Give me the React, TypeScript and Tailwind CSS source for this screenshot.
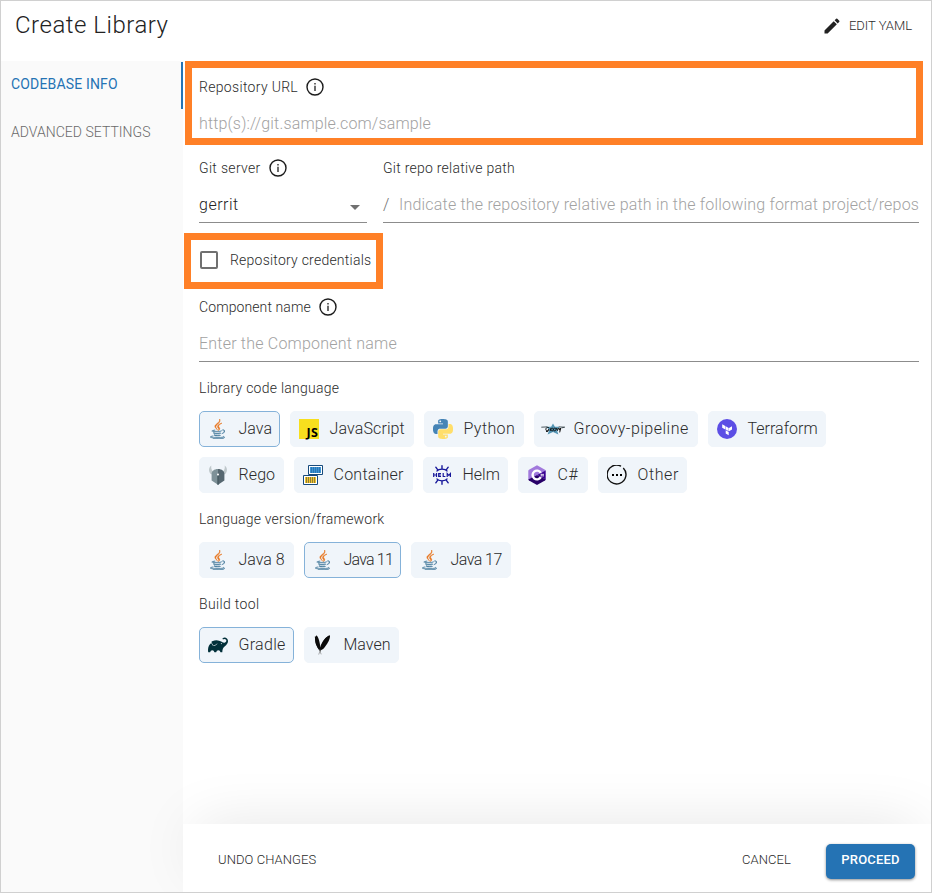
import type { ReactNode } from "react";
import { MdEdit } from "react-icons/md";
import { SiGradle } from "react-icons/si";

const JavaIcon = () => (
  <svg viewBox="0 0 384 512" className="mr-px h-5 w-[15px]">
    <g fill="#e8761f" stroke="#e8761f" strokeWidth="14">
      <path d="M192.34 280.8c-19-42.7-83.1-80.2 0-145.8C296 53.2 242.84 0 242.84 0c21.5 84.5-75.6 110.1-110.7 162.6-23.9 35.9 11.7 74.4 60.2 118.2z" />
      <path d="M306.94 104.6c.1 0-175.2 43.8-91.5 140.2 24.7 28.4-6.5 54-6.5 54s62.7-32.4 33.9-72.9c-26.9-37.8-47.5-56.6 64.1-121.3z" />
    </g>
    <g fill="#4b7f9f" stroke="#4b7f9f" strokeWidth="12">
      <path d="M277.74 312.9c9.8-6.7 23.4-12.5 23.4-12.5s-38.7 7-77.2 10.2c-47.1 3.9-97.7 4.7-123.1 1.3-60.1-8 33-30.1 33-30.1s-36.1-2.4-80.6 19c-52.5 25.4 130 37 224.5 12.1z" />
      <path d="M300.84 375.1a12.19 12.19 0 0 1-2 2.6c128.3-33.7 81.1-118.9 19.8-97.3a17.33 17.33 0 0 0-8.2 6.3 70.45 70.45 0 0 1 11-3c31-6.5 75.5 41.5-20.6 91.4z" />
      <path d="M348 437.4s14.5 11.9-15.9 21.2c-57.9 17.5-240.8 22.8-291.6.7-18.3-7.9 16-19 26.8-21.3 11.2-2.4 17.7-2 17.7-2-20.3-14.3-131.3 28.1-56.4 40.2C232.84 509.4 401 461.3 348 437.4zM124.44 396c-78.7 22 47.9 67.4 148.1 24.5a185.89 185.89 0 0 1-28.2-13.8c-44.7 8.5-65.4 9.1-106 4.5-33.5-3.8-13.9-15.2-13.9-15.2z" />
      <path d="M304.24 493.2c-78.7 14.8-175.8 13.1-233.3 3.6 0-.1 11.8 9.7 72.4 13.6 92.2 5.9 233.8-3.3 237.1-46.9 0 0-6.4 16.5-76.2 29.7z" />
      <path d="M260.64 353c-59.2 11.4-93.5 11.1-136.8 6.6-33.5-3.5-11.6-19.7-11.6-19.7-86.8 28.8 48.2 61.4 169.5 25.9a60.37 60.37 0 0 1-21.1-12.8z" />
    </g>
  </svg>
);

const JsIcon = () => (
  <span className="flex size-5 items-end justify-end bg-[#f7df1e] pr-px font-['Open_Sans',sans-serif] text-[12.5px] leading-[13px] font-bold tracking-[0.2px] text-black">
    JS
  </span>
);

const PythonIcon = () => (
  <svg viewBox="0 0 24 24" className="size-5">
    <path
      fill="#4584b6"
      d="M14.25.18l.9.2.73.26.59.3.45.32.34.34.25.34.16.33.1.3.04.26.02.2-.01.13V8.5l-.05.63-.13.55-.21.46-.26.38-.3.31-.33.25-.35.19-.35.14-.33.1-.3.07-.26.04-.21.02H8.77l-.69.05-.59.14-.5.22-.41.27-.33.32-.27.35-.2.36-.15.37-.1.35-.07.32-.04.27-.02.21v3.06H3.17l-.21-.03-.28-.07-.32-.12-.35-.18-.36-.26-.36-.36-.35-.46-.32-.59-.28-.73-.21-.88-.14-1.05-.05-1.23.06-1.22.16-1.04.24-.87.32-.71.36-.57.4-.44.42-.33.42-.24.4-.16.36-.1.32-.05.24-.01h.16l.06.01h8.16v-.83H6.18l-.01-2.75-.02-.37.05-.34.11-.31.17-.28.25-.26.31-.23.38-.2.44-.18.51-.15.58-.12.64-.1.71-.06.77-.04.84-.02 1.27.05zm-6.3 1.98l-.23.33-.08.41.08.41.23.34.33.22.41.09.41-.09.33-.22.23-.34.08-.41-.08-.41-.23-.33-.33-.22-.41-.09-.41.09z"
    />
    <path
      fill="#ffde6a"
      d="M21.04 6.11l.28.06.32.12.35.18.36.27.36.35.35.47.32.59.28.73.21.88.14 1.04.05 1.23-.06 1.23-.16 1.04-.24.86-.32.71-.36.57-.4.45-.42.33-.42.24-.4.16-.36.09-.32.05-.24.02-.16-.01h-8.22v.82h5.84l.01 2.76.02.36-.05.34-.11.31-.17.29-.25.25-.31.24-.38.2-.44.17-.51.15-.58.13-.64.09-.71.07-.77.04-.84.01-1.27-.04-1.07-.14-.9-.2-.73-.25-.59-.3-.45-.33-.34-.34-.25-.34-.16-.33-.1-.3-.04-.25-.02-.2.01-.13v-5.34l.05-.64.13-.54.21-.46.26-.38.3-.32.33-.24.35-.2.35-.14.33-.1.3-.06.26-.04.21-.02.13-.01h5.84l.69-.05.59-.14.5-.21.41-.28.33-.32.27-.35.2-.36.15-.36.1-.35.07-.32.04-.28.02-.21V6.07h2.09l.14.01zm-6.47 14.25l-.23.33-.08.41.08.41.23.33.33.23.41.08.41-.08.33-.23.23-.33.08-.41-.08-.41-.23-.33-.33-.23-.41-.08-.41.08z"
    />
  </svg>
);

const GroovyIcon = () => (
  <svg viewBox="0 0 24 12" className="h-3 w-6 shrink-0">
    <path d="M12 .6l1.900 3.200h5l-3.100 3 1.600 4.700-5.400-2.400-5.400 2.400 1.600-4.700-3.100-3h5z" fill="#5596b5" />
    <path d="M.3 4.200l6-.3M17.700 3.900l6 .3-3.200.7" fill="none" stroke="#39454b" strokeWidth=".9" />
    <path
      d="M7.800 4.600c-1.600-.8-3.300.6-2.900 2.200s2.200 1.300 2.600-.4M7.600 6.300c.2 1.900-1.300 2.800-2.600 2M9.300 7.900V5.300M11.100 5.100a1.200 1.400 0 1 0 .1 0M13.700 5.100a1.200 1.400 0 1 0 .1 0M15.500 5l1 2.600 1-2.600M18 5l.7 2.200 1-2.200-1 4.400"
      fill="none"
      stroke="#111"
      strokeWidth="1"
    />
  </svg>
);

const TerraformIcon = () => (
  <svg viewBox="0 0 20 20" className="size-5">
    <circle cx="10" cy="10" r="10" fill="#5c4ee5" />
    <path d="M5.200 5.200l3.100 1.700v3.500L5.200 8.700zM8.700 7.200l3 1.700v3.400l-3-1.700zM15 7.200v3.400l-3 1.700V8.900zM8.700 11.200l3 1.700v3.400l-3-1.700z" fill="#fff" />
  </svg>
);

const RegoIcon = () => (
  <svg viewBox="0 0 20 20" className="size-5">
    <path d="M3.300.4C.3 2.700.2 7.200 3.600 9.600l1.700-3C3.500 5 2.900 3 3.300.4zM16.700.4c3 2.300 3.100 6.800-.3 9.200l-1.700-3c1.800-1.600 2.400-3.600 2-6.200z" fill="#bfc8cb" />
    <path d="M10 4c-4 0-6.400 2.200-6.400 5v6.500L10 19.800z" fill="#7e9198" />
    <path d="M10 4c4 0 6.400 2.200 6.400 5v6.500L10 19.800z" fill="#566770" />
    <path d="M9.300 10.500h1.400v9.100L10 20l-.7-.4z" fill="#465a61" />
    <circle cx="10" cy="9.600" r="1" fill="#fff" />
  </svg>
);

const ContainerIcon = () => (
  <svg viewBox="0 0 20 20" className="size-5">
    <path d="M5.500.5h14v9h-14z" fill="#fff" stroke="#174a7c" />
    <path d="M7 2h11v6H7z" fill="#3c94d4" />
    <path d="M8.500 2v6M10.500 2v6M12.500 2v6M14.500 2v6M16.500 2v6" stroke="#1e5f9d" strokeWidth=".6" />
    <path d="M.5 10.500h14v9H.5z" fill="#fff" stroke="#174a7c" />
    <path d="M2 12h11v6H2z" fill="#f0c62f" />
    <path d="M3.500 12v6M5.500 12v6M7.500 12v6M9.500 12v6M11.500 12v6" stroke="#4f4a3a" strokeWidth=".6" />
  </svg>
);

const HelmIcon = () => (
  <svg viewBox="0 0 20 20" className="size-5" fill="none" stroke="#17179a">
    <path d="M4.500 6.300C7 3.300 13 3.300 15.500 6.300M4.500 13.700c2.500 3 8.500 3 11 0" strokeWidth="1.300" />
    <path d="M10 3.600V.8M5.600 4.600L3.800 2.200M14.400 4.600l1.800-2.400M10 16.400v2.800M5.600 15.400l-1.800 2.400M14.400 15.400l1.800 2.400" strokeWidth="1.400" strokeLinecap="round" />
    <path d="M1.700 8v4M4.500 8v4M1.700 10h2.800M9 8.500H6.700v3H9M6.700 10h2.200M11.200 8v3.500h2.200M15.200 12V8.500l1.600 1.800 1.600-1.800V12" strokeWidth="1.200" />
  </svg>
);

const CSharpIcon = () => (
  <svg viewBox="0 0 20 20" className="size-5">
    <path d="M10 .2l8 4.500q.7.500.7 1.200L10 10 1.300 14.900V5.900q0-.8.700-1.200z" fill="#a179dc" />
    <path d="M1.300 14.500L10 10l8.700 4.300q0 .7-.7 1.200l-8 4.400-8-4.400q-.7-.4-.7-1z" fill="#280068" />
    <path d="M18.700 5.600v9L10 10z" fill="#390091" />
    <path d="M13.800 7.800a4.400 4.400 0 1 0 0 4.400" fill="none" stroke="#fff" strokeWidth="2.400" />
    <path d="M14.300 8.600v3M16.100 8.600v3M13.600 9.500h3.300M13.600 10.800h3.300" stroke="#fff" strokeWidth=".6" />
  </svg>
);

const OtherIcon = () => (
  <svg viewBox="0 0 20 20" className="size-5">
    <path d="M15.200 1.900A9.400 9.400 0 1 0 17.200 3.900" transform="rotate(-8 10 10)" fill="none" stroke="#111" strokeWidth="1.400" />
    <path d="M5 9h2v2H5zM9 9h2v2H9zM13 9h2v2h-2z" fill="#000" />
  </svg>
);

const MavenIcon = () => (
  <svg viewBox="0 0 20 20" className="size-5">
    <path d="M3.600.3C2.200 2 1.500 6 3.200 10c.7 2 1.800 3.700 3.200 5.300.9-2 .9-4.500.3-7.400C6 4.500 5.200 2 3.600.3z" fill="#0b0b0b" />
    <path d="M16.900.5c-2.300.4-4.400 2.200-6.200 5.300-1.700 3-3 6.200-3.300 9.600 2-.6 3.600-1.900 5-4.100 2.500-3.300 4.900-7.400 4.500-10.800z" fill="#0b0b0b" />
    <path d="M2.600 1.500c.2 5 1.500 9.500 4.500 13.500 1.500-6 5-11.500 9.600-14" fill="none" stroke="#0b0b0b" strokeWidth="1.600" />
    <path d="M6.500 14.500c.4 1.500.9 3 1.700 4.800M7.900 14.500c-.9 1.500-1.500 3-2.200 5" stroke="#777" strokeWidth=".6" fill="none" />
  </svg>
);

const InfoIcon = () => (
  <svg viewBox="0 0 18 18" className="size-[18px]" fill="none" stroke="#1c1c1c">
    <circle cx="9" cy="9" r="8" strokeWidth="1.400" />
    <path d="M9 7.800V13" strokeWidth="1.300" />
    <path d="M9 5v1.500" strokeWidth="1.300" />
  </svg>
);

type ChipProps = { icon: ReactNode; label: string; size: string; on?: boolean };

const Chip = ({ icon, label, size, on }: ChipProps) => (
  <button
    className={`flex h-9 items-center rounded-[5px] border bg-[#f0f5fa] pl-2 ${size} ${on ? "border-[#85b2d9]" : "border-[#f0f5fa]"}`}
  >
    <span className="flex w-5 shrink-0 items-center justify-center">{icon}</span>
    <span className="-mt-px ml-[10.5px] text-base leading-5 whitespace-nowrap text-[#2b2b2b]">{label}</span>
  </button>
);

type LabelProps = { children: ReactNode; info?: boolean; track?: string };

const Label = ({ children, info, track = "tracking-[0.25px]" }: LabelProps) => (
  <div className={`flex h-5 items-center gap-2 text-sm whitespace-nowrap text-[#2b2b2b] ${track}`}>
    <span>{children}</span>
    {info && <InfoIcon />}
  </div>
);

export default function App() {
  return (
    <div className="flex h-[893px] w-[932px] flex-col overflow-hidden border border-[#d0d0d0] bg-white font-[Roboto,sans-serif] font-[350]">
      <header className="flex h-[60px] shrink-0 items-start justify-between pr-[19px] pl-[14px]">
        <h1 className="mt-2 text-2xl leading-8 tracking-[0.52px] text-[#222]">Create Library</h1>
        <button className="mt-[15px] flex h-5 items-center gap-[7px] text-[13px] tracking-[-0.02px] text-[#2b2b2b]">
          <MdEdit className="size-5 text-[#222]" />
          EDIT YAML
        </button>
      </header>
      <div className="flex min-h-0 flex-1">
        <nav className="w-[182px] shrink-0 bg-[#fafafa] pt-px text-sm">
          <div className="flex h-[47px] items-center border-r-2 border-[#2573b4] pb-[3px] pl-[10px] font-normal tracking-[0.16px] text-[#2573b4]">
            CODEBASE INFO
          </div>
          <div className="flex h-12 items-center pb-[3px] pl-[10px] tracking-[0.03px] text-[#6a6a6a]">ADVANCED SETTINGS</div>
        </nav>
        <div className="flex min-w-0 flex-1 flex-col">
          <main className="flex-1">
            <section className="ml-[2px] h-[84px] w-[738px] border-[7px] border-[#ff8027] pt-[9px] pl-[7px]">
              <Label info track="tracking-[0.32px]">Repository URL</Label>
              <div className="mt-[17px] text-base leading-5 tracking-[0.16px] text-[#a2a2a2]">http(s)://git.sample.com/sample</div>
            </section>
            <section className="mt-[13px] ml-4 flex w-[720px] gap-4">
              <div className="w-[168px]">
                <Label info track="tracking-[0.32px]">Git server</Label>
                <div className="mt-[17px] flex h-7 items-start justify-between border-b border-[#8c8c8c] text-base leading-5 tracking-[0.5px] text-[#222]">
                  gerrit
                  <svg viewBox="0 0 10 5" className="mt-[10px] mr-[7px] h-[5px] w-[10px]">
                    <path d="M0 0h10L5 5z" fill="#707070" />
                  </svg>
                </div>
              </div>
              <div className="w-[536px]">
                <Label>Git repo relative path</Label>
                <div className="mt-[17px] flex h-7 items-start border-b border-[#8c8c8c] text-base leading-5 tracking-[0.2px] whitespace-nowrap text-[#a2a2a2]">
                  <span className="w-4 shrink-0 text-[#707070]">/</span>
                  Indicate the repository relative path in the following format project/repos
                </div>
              </div>
            </section>
            <section className="mt-[10px] ml-px flex h-14 w-[199px] items-center border-[7px] border-[#ff8027] pb-[2px] pl-[9px]">
              <span className="size-[18px] shrink-0 rounded-[2px] border-2 border-[#707070]" />
              <span className="-mt-px ml-3 text-sm tracking-[0.23px] whitespace-nowrap text-[#2b2b2b]">Repository credentials</span>
            </section>
            <div className="ml-4 w-[720px]">
              <section className="pt-2">
                <Label info track="tracking-[0.1px]">Component name</Label>
                <div className="mt-[17px] h-7 border-b border-[#8c8c8c] text-base leading-5 tracking-[0.21px] text-[#a2a2a2]">
                  Enter the Component name
                </div>
              </section>
              <section className="pt-4">
                <Label track="tracking-[0.25px]">Library code language</Label>
                <div className="mt-[13px] flex flex-wrap gap-[10px]">
                  <Chip icon={<JavaIcon />} label="Java" size="w-[81px] tracking-[0.05px]" on />
                  <Chip icon={<JsIcon />} label="JavaScript" size="w-[124px] tracking-[0.12px]" />
                  <Chip icon={<PythonIcon />} label="Python" size="w-[100px] tracking-[0.4px]" />
                  <Chip icon={<GroovyIcon />} label="Groovy-pipeline" size="w-[164px] tracking-[0.5px]" />
                  <Chip icon={<TerraformIcon />} label="Terraform" size="w-[118px] tracking-[0.02px]" />
                  <Chip icon={<RegoIcon />} label="Rego" size="w-[85px] tracking-[0.1px]" />
                  <Chip icon={<ContainerIcon />} label="Container" size="w-[119px] tracking-[0.25px]" />
                  <Chip icon={<HelmIcon />} label="Helm" size="w-[85px] tracking-[-0.02px]" />
                  <Chip icon={<CSharpIcon />} label="C#" size="w-[70px] tracking-[0.5px]" />
                  <Chip icon={<OtherIcon />} label="Other" size="w-[89px] tracking-[0.6px]" />
                </div>
              </section>
              <section className="pt-4">
                <Label track="tracking-[0.2px]">Language version/framework</Label>
                <div className="mt-[13px] flex gap-[10px]">
                  <Chip icon={<JavaIcon />} label="Java 8" size="w-[95px]" />
                  <Chip icon={<JavaIcon />} label="Java 11" size="w-[97px] tracking-[-0.8px]" on />
                  <Chip icon={<JavaIcon />} label="Java 17" size="w-[100px] tracking-[-0.55px]" />
                </div>
              </section>
              <section className="pt-4">
                <Label track="tracking-[0.35px]">Build tool</Label>
                <div className="mt-[13px] flex gap-[10px]">
                  <Chip icon={<SiGradle className="size-5 text-[#02303a]" />} label="Gradle" size="w-[95px] tracking-[0.3px]" on />
                  <Chip icon={<MavenIcon />} label="Maven" size="w-[95px] tracking-[0.02px]" />
                </div>
              </section>
            </div>
          </main>
          <footer className="flex h-[68px] shrink-0 items-center bg-white pr-4 pl-[35px] text-[13px] text-[#2b2b2b] shadow-[0_-10px_60px_-14px_rgba(0,0,0,0.13)]">
            <button className="pt-1 tracking-[0.08px]">UNDO CHANGES</button>
            <button className="mr-[35px] ml-auto pt-1 tracking-[0.1px]">CANCEL</button>
            <button className="mt-[7px] h-[35px] w-[89px] rounded-[5px] bg-[#2573b4] pb-[3px] font-medium tracking-[0.2px] text-white shadow-[0_1px_3px_rgba(0,0,0,0.45)]">
              PROCEED
            </button>
          </footer>
        </div>
      </div>
    </div>
  );
}
